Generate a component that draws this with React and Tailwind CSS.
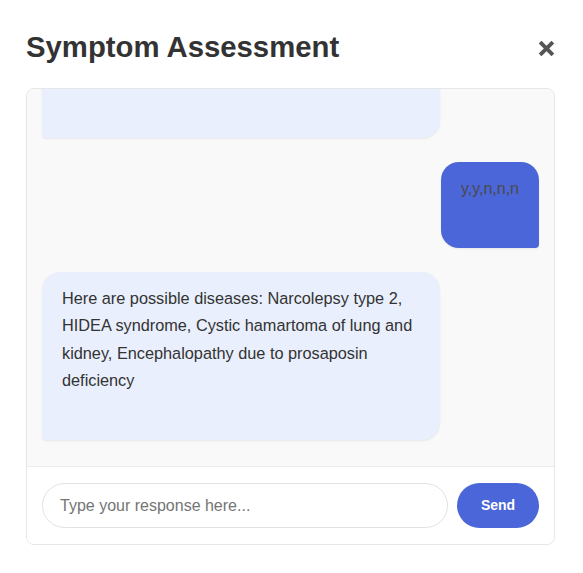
import React, { useState } from 'react';

const messages = [
  { role: 'bot', text: '', clipped: true },
  { role: 'user', text: 'y,y,n,n,n' },
  {
    role: 'bot',
    text: 'Here are possible diseases: Narcolepsy type 2, HIDEA syndrome, Cystic hamartoma of lung and kidney, Encephalopathy due to prosaposin deficiency',
  },
];

const Bubble = ({ role, text, clipped }) => {
  if (role === 'user') {
    return (
      <div className="flex justify-end">
        <div className="max-w-[80%] bg-[#4a66d8] text-[#4a4a4a] text-[16px] leading-[27.5px] pt-[13px] pb-[45px] px-5 rounded-[18px] rounded-br-[4px] shadow-[0_1px_2px_rgba(0,0,0,0.08)]">
          {text}
        </div>
      </div>
    );
  }
  if (clipped) {
    return (
      <div className="flex justify-start -mt-[24px]">
        <div className="w-[80%] h-[73px] bg-[#e9effc] rounded-[18px] rounded-bl-[4px] rounded-t-none shadow-[0_1px_2px_rgba(0,0,0,0.08)]" />
      </div>
    );
  }
  return (
    <div className="flex justify-start">
      <div className="max-w-[80%] bg-[#e9effc] text-[#333] text-[16.3px] leading-[27.5px] pt-[13px] pb-[45px] px-5 rounded-[18px] rounded-bl-[4px] shadow-[0_1px_2px_rgba(0,0,0,0.08)]">
        {text}
      </div>
    </div>
  );
};

export default function App() {
  const [value, setValue] = useState('');
  return (
    <div className="w-[583px] h-[573px] bg-white font-['Liberation_Sans',Arial,sans-serif] pl-[26px] pt-[28px]">
      <div className="w-[531px] flex items-center justify-between h-[38px]">
        <h1 className="text-[29.3px] font-bold text-[#333] leading-none">Symptom Assessment</h1>
        <button className="w-[17px] h-[17px] mr-[2px] mt-[2px] text-[#555]" aria-label="Close">
          <svg viewBox="0 0 16 16" className="w-full h-full" fill="none" stroke="currentColor" strokeWidth="3.6" strokeLinecap="butt">
            <path d="M2 2L14 14M14 2L2 14" />
          </svg>
        </button>
      </div>
      <div className="w-[529px] mt-[22px] border border-[#e6e6e6] rounded-[8px] overflow-hidden">
        <div className="h-[377px] bg-[#f9f9f9] overflow-hidden px-[15px] flex flex-col gap-[24px]">
          {messages.map((m, i) => (
            <Bubble key={i} {...m} />
          ))}
        </div>
        <div className="border-t border-[#ececec] bg-white flex items-center gap-[9px] px-[15px] pt-[16px] pb-[16px]">
          <input
            value={value}
            onChange={(e) => setValue(e.target.value)}
            placeholder="Type your response here..."
            className="flex-1 h-[45px] rounded-full border border-[#e2e2e2] px-[17px] text-[16px] text-[#333] placeholder:text-[#757575] outline-none"
          />
          <button className="w-[82px] h-[45px] rounded-full bg-[#4a66d8] text-white text-[14px] font-bold">
            Send
          </button>
        </div>
      </div>
    </div>
  );
}
